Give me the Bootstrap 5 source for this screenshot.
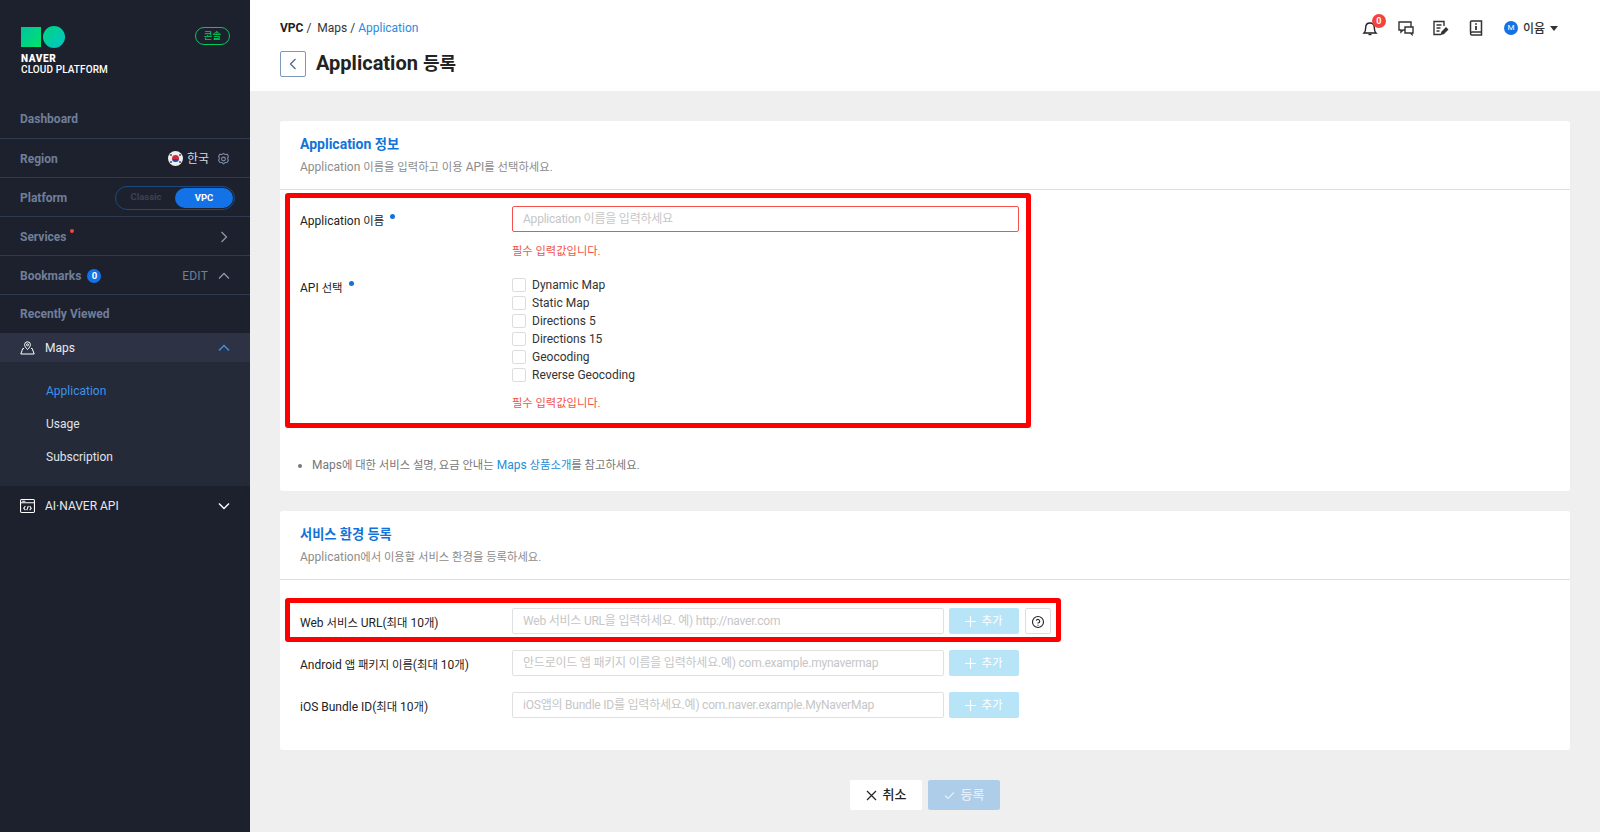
<!doctype html>
<html lang="ko"><head><meta charset="utf-8"><title>Application 등록</title>
<link href="https://cdn.jsdelivr.net/npm/bootstrap@5.3.0/dist/css/bootstrap.min.css" rel="stylesheet">
<style>
html,body{height:832px;overflow:hidden}
body{font-family:Roboto,"Noto Sans CJK KR",sans-serif;font-size:12px;color:#222;background:#efefef}
.shell{height:832px}
.ko{font-size:.945em}
.side{width:250px;flex:none;background:#1d212e;color:#fff}
.logo-zone{height:100px;padding:27px 20px 0 21px}
.logo-sq{width:20px;height:20px;background:linear-gradient(135deg,#00c4a0,#00e46a)}
.logo-ci{width:22px;height:22px;border-radius:50%;background:linear-gradient(135deg,#00d57f,#00c4c8);margin:-1px 0 0 2px}
.logo-t{font-size:10px;line-height:11px;margin-top:5px;font-weight:500;letter-spacing:.1px}
.logo-t b{font-weight:900;display:block;letter-spacing:.6px}
.console{width:35px;height:18px;border:1px solid #00c85a;border-radius:9px;color:#00c85a;font-size:9.5px;line-height:16px;text-align:center;font-weight:500}
.srow{height:39px;padding:1px 20px 0;border-bottom:1px solid #2f3a50;color:#6f7f99;font-weight:700;font-size:12px}
.srow.flat{padding-top:0}
.srow.last{border:0;height:38px}
.flag{width:15px;height:15px;border-radius:50%;background:#eee;position:relative;overflow:hidden;flex:none}
.flag i{position:absolute;left:4px;top:4px;width:7px;height:7px;border-radius:50%;background:linear-gradient(#d2283c 50%,#244a9c 50%)}
.flag u{position:absolute;width:2px;height:2px;background:#777}
.region{color:#d4d8e0;font-weight:400}
.toggle{width:120px;height:24px;margin-right:-5px;border:1px solid #1a4a80;border-radius:12px;padding:1px;font-size:9.5px}
.toggle span{flex:1;text-align:center;color:#3a4355}
.toggle .on{background:#1272e6;color:#fff;border-radius:10px;line-height:20px;height:20px;flex:0 0 58px}
.redot{width:4px;height:4px;border-radius:50%;background:#f4433c;position:absolute;top:1px;right:-7px}
.cnt{width:14px;height:14px;border-radius:50%;background:#1272e6;color:#fff;font-size:9.5px;line-height:14px;text-align:center;margin-left:6px}
.edit{color:#6f7f99;font-weight:400;letter-spacing:.2px;margin-right:10px}
.maprow{height:29px;padding:0 20px;background:#2d3345;color:#e8eaee}
.mname{margin-left:10px;font-size:12px}
.subm{height:124px;background:#252a38;padding:13px 0 0 46px;font-size:12px;color:#e0e3e8}
.subm div{height:33px;line-height:33px}
.subm .cur{color:#3a94e8}
.airow{height:39px;padding:0 20px;color:#e8eaee}
.top{height:91px;background:#fff;padding:0 30px;flex:none}
.crumb{height:50px;padding-top:20px;line-height:16px;color:#333;font-size:12px}
.crumb b{font-weight:700;color:#222}
.crumb .cur{color:#2a8ae0}
.back{width:26px;height:26px;border:1px solid #7d98b8;border-radius:2px;background:#fff;padding:0;margin-right:10px;color:#4a6a90}
.ptitle{font-size:20px;font-weight:700;color:#222;margin:0;line-height:26px}
.tools{height:56px;padding-right:12px}
.ico{width:20px;height:20px;margin-left:16px;position:relative;color:#333;flex:none}
.nbadge{position:absolute;left:12px;top:-4px;width:14px;height:14px;border-radius:50%;background:#f4433c;color:#fff;font-size:9px;font-weight:700;text-align:center;line-height:14px}
.avatar{width:14px;height:14px;border-radius:50%;background:#1272e6;color:#fff;font-size:8px;line-height:14px;text-align:center;margin-right:5px}
.uname{font-weight:500;font-size:12px;color:#333;margin-top:1px}
.caret{border:4px solid transparent;border-top:5px solid #333;border-bottom:0;margin-left:5px}
.mainz{padding:30px 30px 0;min-width:0}
.panel{background:#fff;border:0;border-radius:2px;box-shadow:0 0 1px rgba(0,0,0,.05)}
.panel-h{height:69px;padding:15px 20px 0;border-bottom:1px solid #ddd}
.panel-h h2{font-size:14px;line-height:16px;font-weight:700;color:#1272d8;margin:0 0 7px}
.panel-h p{font-size:12px;line-height:14px;color:#8c8c8c;margin:0}
.redbox{border:5px solid #f00;border-radius:3px}
.rb1{width:746px;height:235px;margin:3px 0 0 5px;padding:8px 0 0}
.field-l{width:222px;flex:none;padding-left:10px;font-size:12px;line-height:14px;color:#222}
.req{width:5px;height:5px;border-radius:50%;background:#1272d8;position:absolute;top:0;right:-11px}
.inp{height:26px;border:1px solid #e0e0e0;border-radius:2px;padding:0 10px;font-size:12px;font-family:inherit;width:432px;outline:0;background:#fff;display:block}
.inp::placeholder{color:#c6c6c6;letter-spacing:-.22px}
.inp.bad{width:507px;border-color:#f4524a}
.err{color:#f4524a;font-size:11.25px;line-height:14px;margin-top:13px}
.chk{height:18px;line-height:18px;color:#333}
.box{width:14px;height:14px;border:1px solid #ddd;border-radius:2px;margin-right:6px;background:#fff}
.note{margin:29px 0 0 32px;color:#777;line-height:16px;padding:0;font-size:12px}
.note a{color:#1a8ed8;text-decoration:none}
.addb{width:70px;height:26px;margin-left:5px;background:#b8e4f8;color:#fff;border:0;border-radius:2px;padding:0;font-size:11.5px;line-height:26px}
.addb svg{margin-right:5px;vertical-align:-2px}
.help{width:26px;height:26px;margin-left:6px;border:1px solid #ddd;border-radius:2px;background:#fff;padding:0;color:#222;line-height:22px}
.rb2{width:776px;height:44px;margin:18px 0 0 5px;padding:2px 0 0}
.frow{height:26px;margin-top:16px;padding-left:10px}
.lab3{padding-top:3px}
.lab4{padding-top:4px}
.foot{margin-top:30px}
.fbtn{width:72px;height:30px;border:0;border-radius:2px;padding:0;font-size:13px;font-weight:500;margin:0 3px;background:#fff;color:#222}
.fbtn svg{margin-right:6px}
.fbtn.dis{background:#aecde8;color:#e4eef8}
</style></head>
<body>
<div class="d-flex shell">
<aside class="side d-flex flex-column">
  <div class="logo-zone d-flex justify-content-between">
    <div><div class="d-flex"><div class="logo-sq"></div><div class="logo-ci"></div></div>
    <div class="logo-t"><b>NAVER</b>CLOUD PLATFORM</div></div>
    <div class="console">콘솔</div>
  </div>
  <div class="srow flat d-flex align-items-center">Dashboard</div>
  <div class="srow d-flex align-items-center justify-content-between">Region
    <span class="d-flex align-items-center region"><span class="flag"><i></i><u style="left:2px;top:3px"></u><u style="right:2px;top:3px"></u><u style="left:2px;bottom:3px"></u><u style="right:2px;bottom:3px"></u></span><span style="margin-left:4px">한국</span>
    <svg style="margin-left:8px" width="13" height="14" viewBox="0 0 24 24" fill="none" stroke="#7f8ea6" stroke-width="2"><path d="M12 1.500l3 2.300 4-.5 2 3.700-1.500 3.800 1.500 3.500-2 3.700-4 .5-3 2.500-3-2.500-4-.5-2-3.700 1.500-3.500L3 7 5 3.300l4 .5z"/><circle cx="12" cy="12" r="3.500"/></svg></span></div>
  <div class="srow d-flex align-items-center justify-content-between">Platform
    <div class="toggle d-flex align-items-center"><span>Classic</span><span class="on fw-bold">VPC</span></div></div>
  <div class="srow d-flex align-items-center justify-content-between"><span class="position-relative">Services<i class="redot"></i></span>
    <svg style="margin-right:2px" width="8" height="12" viewBox="0 0 8 12" fill="none" stroke="#8a97ab" stroke-width="1.300"><path d="M1.500 1l5 5-5 5"/></svg></div>
  <div class="srow d-flex align-items-center"><span>Bookmarks</span><span class="cnt">0</span>
    <span class="edit ms-auto">EDIT</span><svg width="12" height="8" viewBox="0 0 12 8" fill="none" stroke="#8a97ab" stroke-width="1.300"><path d="M1 6.500l5-5 5 5"/></svg></div>
  <div class="srow flat last d-flex align-items-center">Recently Viewed</div>
  <div class="maprow d-flex align-items-center">
    <svg width="15" height="14" viewBox="0 0 15 14" fill="none" stroke="#fff" stroke-width="1"><path d="M7.500 8.500C5.500 6.500 4.600 5.200 4.600 3.700a2.900 2.900 0 0 1 5.800 0c0 1.500-.9 2.800-2.900 4.800z"/><circle cx="7.500" cy="3.800" r="1"/><path d="M4 7.500H2.800L.8 13h13.400l-2-5.500H11"/></svg>
    <span class="mname">Maps</span>
    <svg class="ms-auto" width="12" height="8" viewBox="0 0 12 8" fill="none" stroke="#3a94e8" stroke-width="1.400"><path d="M1 6.500l5-5 5 5"/></svg></div>
  <div class="subm"><div class="cur">Application</div><div>Usage</div><div>Subscription</div></div>
  <div class="airow d-flex align-items-center">
    <svg width="15" height="14" viewBox="0 0 14 13" fill="none" stroke="#fff" stroke-width="1"><rect x=".5" y=".5" width="13" height="12" rx="1"/><path d="M.5 3.500h13M2 2h3"/><path d="M5 6.500L3.500 8.500 5 10.500M9 6.500l1.500 2-1.500 2M7.800 6.500l-1.500 4"/></svg>
    <span class="mname">AI·NAVER API</span>
    <svg class="ms-auto" width="12" height="8" viewBox="0 0 12 8" fill="none" stroke="#fff" stroke-width="1.400"><path d="M1 1.500l5 5 5-5"/></svg></div>
</aside>
<div class="flex-grow-1 d-flex flex-column" style="min-width:0">
  <header class="top d-flex justify-content-between">
    <div>
      <div class="crumb"><b>VPC</b> /&nbsp; Maps / <span class="cur">Application</span></div>
      <div class="d-flex align-items-center"><button class="back d-flex align-items-center justify-content-center" aria-label="뒤로"><svg width="8" height="12" viewBox="0 0 8 12" fill="none" stroke="currentColor" stroke-width="1.300"><path d="M6.500 1l-5 5 5 5"/></svg></button><h1 class="ptitle">Application <span style="font-size:18px">등록</span></h1></div>
    </div>
    <div class="tools d-flex align-items-center">
      <div class="ico" style="margin:0"><svg width="20" height="20" viewBox="0 0 20 20" fill="none" stroke="#222" stroke-width="1.400"><path d="M4 15h12c-1.500-1.500-1.700-3-1.700-5.500C14.300 6.500 12.500 5 10 5S5.700 6.500 5.700 9.500C5.700 12 5.500 13.500 4 15z"/><path d="M8.500 16.500h3"/></svg><span class="nbadge">0</span></div>
      <div class="ico"><svg width="20" height="20" viewBox="0 0 20 20" fill="none" stroke="#333" stroke-width="1.400"><path d="M3 4h12v8H7l-2 2v-2H3z"/><path d="M9 9h8v6h-1v1.500L14.500 15H9z" fill="#fff"/></svg></div>
      <div class="ico" style="margin-left:14px"><svg width="20" height="20" viewBox="0 0 20 20" fill="none" stroke="#333" stroke-width="1.400"><path d="M14 8V3.500H4v13h7"/><path d="M6.500 7h5M6.500 10h4M6.500 13h3"/><path d="M11.500 16l.5-2 4-4 1.500 1.500-4 4z" fill="#333"/></svg></div>
      <div class="ico"><svg width="20" height="20" viewBox="0 0 20 20" fill="none" stroke="#333" stroke-width="1.500"><path d="M4.500 14.500V4a1 1 0 0 1 1-1h10v14H6a1.500 1.500 0 0 1-1.500-1.500 1.500 1.500 0 0 1 1.500-1.500h9.500" /><path d="M10 5.200v1.600M10 8v4" stroke-width="1.800"/></svg></div>
      <div class="d-flex align-items-center" style="margin-left:18px"><span class="avatar">M</span><span class="uname">이윰</span><span class="caret"></span></div>
    </div>
  </header>
  <main class="mainz">
    <section class="panel" style="height:370px">
      <div class="panel-h"><h2>Application <span class="ko">정보</span></h2><p>Application <span class="ko">이름을 입력하고 이용</span> API<span class="ko">를 선택하세요.</span></p></div>
      <div class="redbox rb1">
        <div class="d-flex">
          <div class="field-l pt-2"><span class="position-relative">Application <span class="ko">이름</span><i class="req"></i></span></div>
          <div><input class="inp bad" placeholder="Application 이름을 입력하세요"><div class="err">필수 입력값입니다.</div></div>
        </div>
        <div class="d-flex" style="margin-top:17px">
          <div class="field-l" style="padding-top:5px"><span class="position-relative">API <span class="ko">선택</span><i class="req"></i></span></div>
          <div>
            <div class="chk d-flex align-items-center"><span class="box"></span>Dynamic Map</div>
            <div class="chk d-flex align-items-center"><span class="box"></span>Static Map</div>
            <div class="chk d-flex align-items-center"><span class="box"></span>Directions 5</div>
            <div class="chk d-flex align-items-center"><span class="box"></span>Directions 15</div>
            <div class="chk d-flex align-items-center"><span class="box"></span>Geocoding</div>
            <div class="chk d-flex align-items-center"><span class="box"></span>Reverse Geocoding</div>
            <div class="err">필수 입력값입니다.</div>
          </div>
        </div>
      </div>
      <ul class="note"><li>Maps<span class="ko">에 대한 서비스 설명, 요금 안내는</span> <a href="#">Maps <span class="ko">상품소개</span></a><span class="ko">를 참고하세요.</span></li></ul>
    </section>
    <section class="panel" style="height:239px;margin-top:20px">
      <div class="panel-h"><h2><span class="ko">서비스 환경 등록</span></h2><p>Application<span class="ko">에서 이용할 서비스 환경을 등록하세요.</span></p></div>
      <div class="redbox rb2 d-flex align-items-center">
        <div class="field-l lab3">Web <span class="ko">서비스</span> URL(<span class="ko">최대</span> 10<span class="ko">개</span>)</div>
        <input class="inp" placeholder="Web 서비스 URL을 입력하세요. 예) http://naver.com">
        <button class="addb"><svg width="11" height="11" viewBox="0 0 11 11" stroke="#fff" stroke-width="1.200"><path d="M5.500 0v11M0 5.500h11"/></svg>추가</button>
        <button class="help" aria-label="도움말"><svg width="14" height="14" viewBox="0 0 14 14" fill="none" stroke="#222" stroke-width="1.100"><circle cx="7" cy="7" r="5.500"/><path d="M5.300 5.600A1.800 1.800 0 1 1 7 8v.6M7 9.800v1"/></svg></button>
      </div>
      <div class="frow d-flex align-items-center" style="margin-top:8px">
        <div class="field-l lab4">Android <span class="ko">앱 패키지 이름</span>(<span class="ko">최대</span> 10<span class="ko">개</span>)</div>
        <input class="inp" placeholder="안드로이드 앱 패키지 이름을 입력하세요.예) com.example.mynavermap">
        <button class="addb"><svg width="11" height="11" viewBox="0 0 11 11" stroke="#fff" stroke-width="1.200"><path d="M5.500 0v11M0 5.500h11"/></svg>추가</button>
      </div>
      <div class="frow d-flex align-items-center">
        <div class="field-l lab4">iOS Bundle ID(<span class="ko">최대</span> 10<span class="ko">개</span>)</div>
        <input class="inp" placeholder="iOS앱의 Bundle ID를 입력하세요.예) com.naver.example.MyNaverMap">
        <button class="addb"><svg width="11" height="11" viewBox="0 0 11 11" stroke="#fff" stroke-width="1.200"><path d="M5.500 0v11M0 5.500h11"/></svg>추가</button>
      </div>
    </section>
    <div class="foot d-flex justify-content-center">
      <button class="fbtn"><svg width="11" height="11" viewBox="0 0 11 11" stroke="#222" stroke-width="1.200"><path d="M1 1l9 9M10 1l-9 9"/></svg>취소</button>
      <button class="fbtn dis"><svg width="11" height="9" viewBox="0 0 11 9" fill="none" stroke="#e4eef8" stroke-width="1.200"><path d="M1 4.500l3 3 6-6"/></svg>등록</button>
    </div>
  </main>
</div>
</div>
<script src="https://cdn.jsdelivr.net/npm/bootstrap@5.3.0/dist/js/bootstrap.bundle.min.js"></script>
</body></html>
